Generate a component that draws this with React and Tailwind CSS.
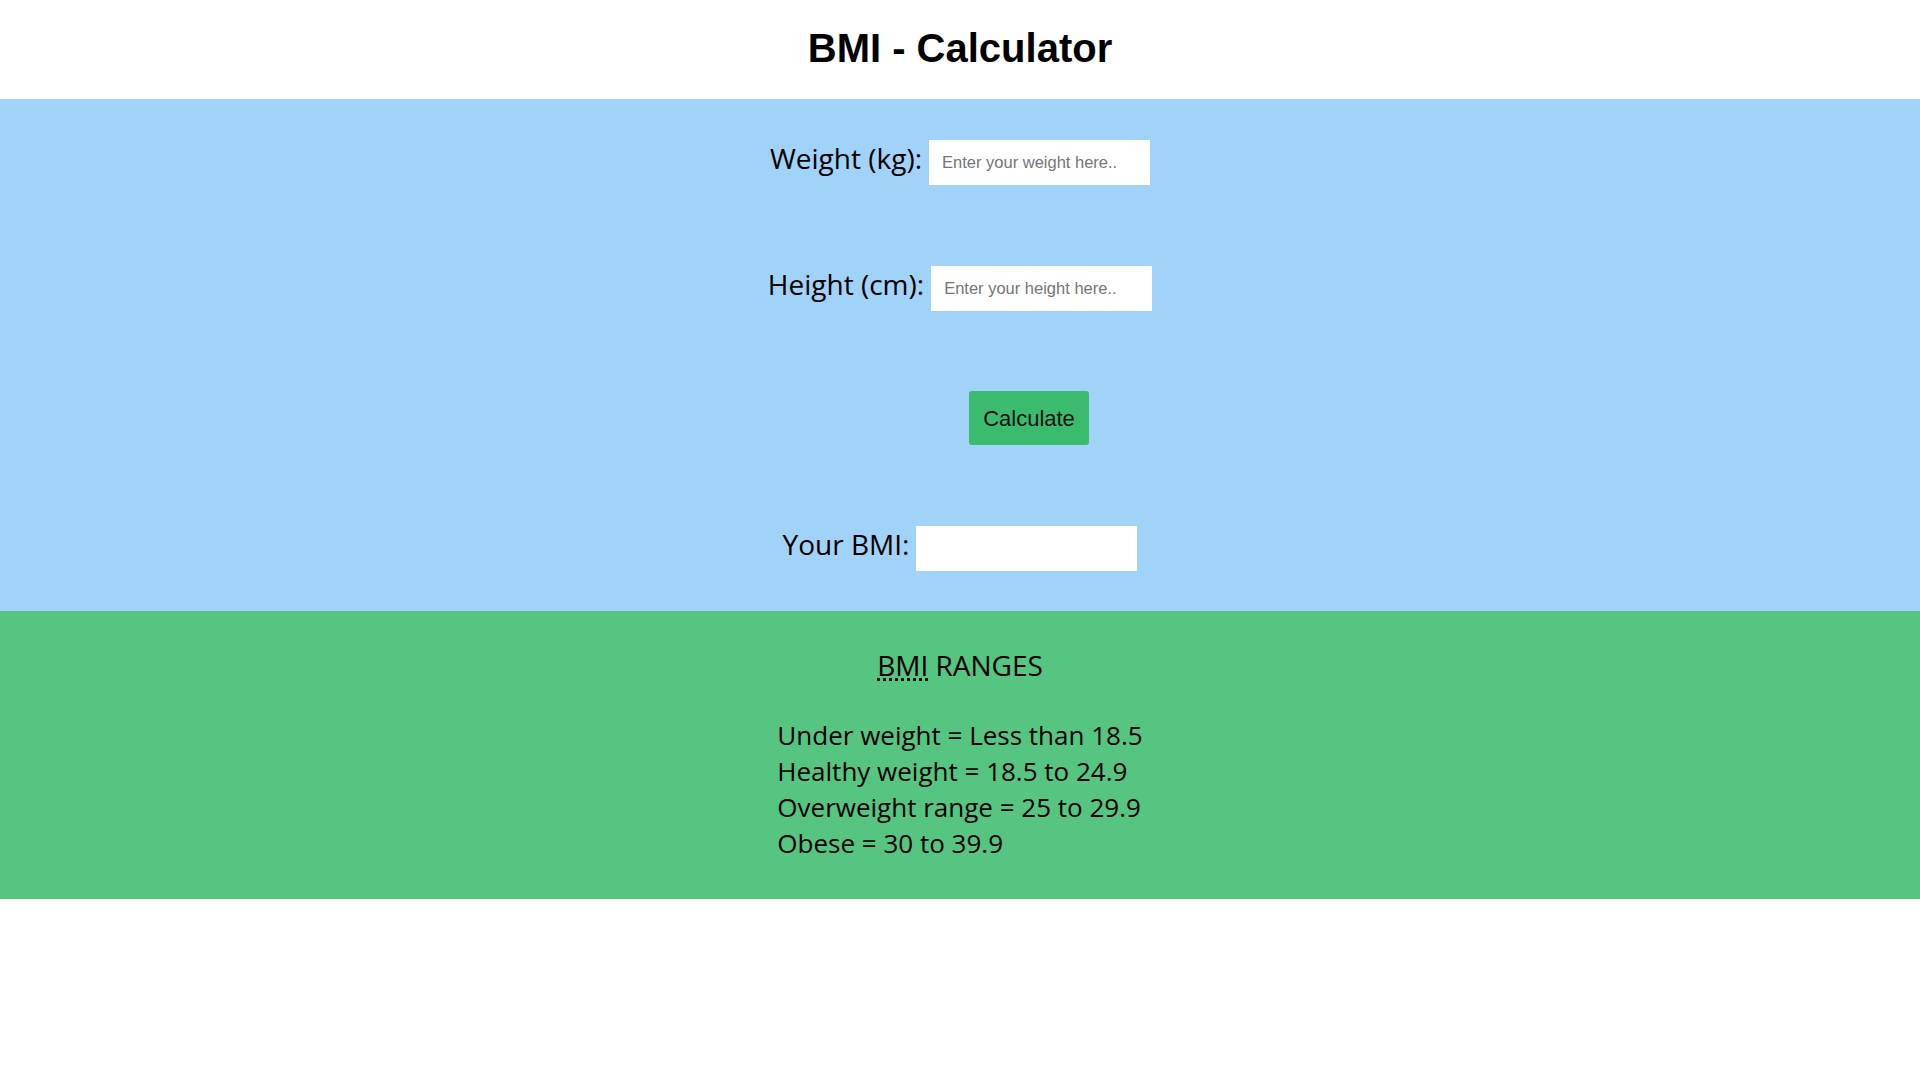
import React, { useState } from "react";

export default function App() {
  const [weight, setWeight] = useState("");
  const [height, setHeight] = useState("");
  const [bmi, setBmi] = useState("");

  const calculate = () => {
    const w = parseFloat(weight);
    const h = parseFloat(height) / 100;
    if (!w || !h) return;
    setBmi((w / (h * h)).toFixed(1));
  };

  return (
    <div className="w-full min-h-screen bg-white text-black">
      {/* header */}
      <header className="h-[99px] pt-[25px] bg-white">
        <h1 className="text-center font-['Liberation_Sans',Arial,sans-serif] text-[40px] leading-[46px] font-bold">
          BMI - Calculator
        </h1>
      </header>

      {/* calculator */}
      <section className="bg-[#a1d2f7] pt-[41px] pb-[40px] flex flex-col items-center font-['Open_Sans',sans-serif]">
        <div className="flex items-baseline justify-center gap-[7px]">
          <label className="text-[28px] leading-[28px] translate-y-[1px]">Weight (kg):</label>
          <input
            type="text"
            value={weight}
            onChange={(e) => setWeight(e.target.value)}
            placeholder="Enter your weight here.."
            className="w-[221px] h-[45px] bg-white border-0 outline-none pl-[13px] font-['Liberation_Sans',Arial,sans-serif] text-[16.5px] placeholder:text-[#757575]"
          />
        </div>

        <div className="mt-[81px] flex items-baseline justify-center gap-[7px]">
          <label className="text-[28px] leading-[28px] translate-y-[1px]">Height (cm):</label>
          <input
            type="text"
            value={height}
            onChange={(e) => setHeight(e.target.value)}
            placeholder="Enter your height here.."
            className="w-[221px] h-[45px] bg-white border-0 outline-none pl-[13px] font-['Liberation_Sans',Arial,sans-serif] text-[16.5px] placeholder:text-[#757575]"
          />
        </div>

        <button
          onClick={calculate}
          className="mt-[80px] ml-[138px] w-[120px] h-[54px] rounded-[3px] bg-[#3bbb6d] font-['Liberation_Sans',Arial,sans-serif] text-[22px] text-[#111]"
        >
          Calculate
        </button>

        <div className="mt-[81px] flex items-baseline justify-center gap-[7px]">
          <label className="text-[28px] leading-[28px] translate-y-[1px]">Your BMI:</label>
          <input
            type="text"
            readOnly
            value={bmi}
            className="w-[221px] h-[45px] bg-white border-0 outline-none pl-[13px] font-['Liberation_Sans',Arial,sans-serif] text-[16.5px]"
          />
        </div>
      </section>

      {/* ranges */}
      <section className="bg-[#56c581] pt-[33px] pb-[38px] flex flex-col items-center font-['Open_Sans',sans-serif]">
        <h3 className="text-[28px] font-normal">
          <abbr title="Body Mass Index">BMI</abbr> RANGES
        </h3>
        <div className="mt-[31px] text-[26px] leading-[36px]">
          <p>Under weight = Less than 18.5</p>
          <p>Healthy weight = 18.5 to 24.9</p>
          <p>Overweight range = 25 to 29.9</p>
          <p>Obese = 30 to 39.9</p>
        </div>
      </section>
    </div>
  );
}
